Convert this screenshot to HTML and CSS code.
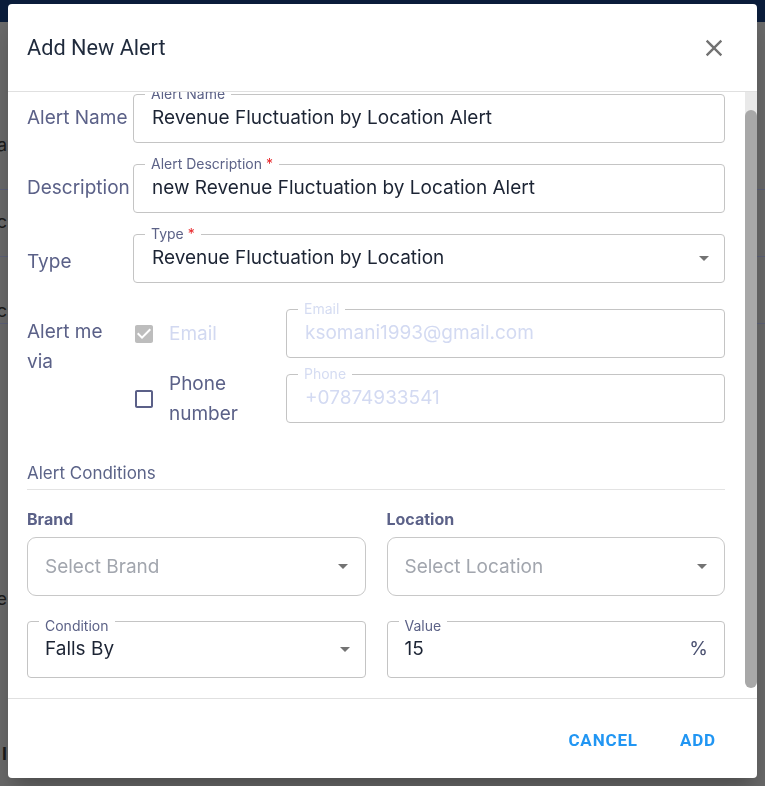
FILE: index.html
```html
<!DOCTYPE html>
<html lang="en">
<head>
<meta charset="utf-8">
<title>Add New Alert</title>
<link rel="stylesheet" href="styles.css">
</head>
<body>
<div class="page">
  <div class="page-bar"></div>
  <div class="ghost ghost-a"><span>Data</span></div>
  <div class="page-line line-1"></div>
  <div class="ghost ghost-c1"><span>Sync</span></div>
  <div class="page-line line-2"></div>
  <div class="ghost ghost-c2"><span>Sync</span></div>
  <div class="page-line line-3"></div>
  <div class="ghost ghost-ne"><span>Name</span></div>
  <div class="ghost ghost-l"><span>l</span></div>
</div>

<div class="backdrop">
  <div class="dialog" role="dialog" aria-labelledby="dlg-title">
    <header class="dialog-head">
      <h2 class="dialog-title" id="dlg-title">Add New Alert</h2>
      <button class="close-btn" aria-label="Close">
        <svg viewBox="0 0 24 24"><path d="M19 6.41 17.59 5 12 10.59 6.41 5 5 6.41 10.59 12 5 17.59 6.41 19 12 13.41 17.59 19 19 17.59 13.41 12z"/></svg>
      </button>
    </header>

    <div class="dialog-main">
      <div class="dialog-body" id="dialog-body">
        <div class="form-row">
          <div class="row-label">Alert Name</div>
          <fieldset class="field">
            <legend>Alert Name</legend>
            <div class="field-value">Revenue Fluctuation by Location Alert</div>
          </fieldset>
        </div>

        <div class="form-row">
          <div class="row-label">Description</div>
          <fieldset class="field">
            <legend>Alert Description <span class="req">*</span></legend>
            <div class="field-value">new Revenue Fluctuation by Location Alert</div>
          </fieldset>
        </div>

        <div class="form-row form-row-last">
          <div class="row-label row-label-low">Type</div>
          <fieldset class="field">
            <legend>Type <span class="req">*</span></legend>
            <div class="field-value"><span>Revenue Fluctuation by Location</span><span class="caret"></span></div>
          </fieldset>
        </div>

        <div class="via">
          <div class="via-label">Alert me<br>via</div>

          <div class="opt">
            <svg class="cb cb-checked" viewBox="0 0 24 24"><path d="M19 3H5c-1.11 0-2 .9-2 2v14c0 1.1.89 2 2 2h14c1.11 0 2-.9 2-2V5c0-1.1-.89-2-2-2zm-9 14l-5-5 1.41-1.41L10 14.17l7.59-7.59L19 8l-9 9z"/></svg>
            <span class="opt-text opt-disabled">Email</span>
          </div>
          <fieldset class="field field-disabled">
            <legend>Email</legend>
            <div class="field-value">ksomani1993@gmail.com</div>
          </fieldset>

          <div class="opt">
            <svg class="cb" viewBox="0 0 24 24"><path d="M19 5v14H5V5h14m0-2H5c-1.1 0-2 .9-2 2v14c0 1.1.9 2 2 2h14c1.1 0 2-.9 2-2V5c0-1.1-.9-2-2-2z"/></svg>
            <span class="opt-text opt-wrap">Phone number</span>
          </div>
          <fieldset class="field field-disabled">
            <legend>Phone</legend>
            <div class="field-value">+07874933541</div>
          </fieldset>
        </div>

        <div class="section-title">Alert Conditions</div>

        <div class="cond-grid">
          <div class="cond-col">
            <div class="cond-label">Brand</div>
            <div class="select-box"><span>Select Brand</span><span class="caret"></span></div>
          </div>
          <div class="cond-col">
            <div class="cond-label">Location</div>
            <div class="select-box"><span>Select Location</span><span class="caret"></span></div>
          </div>
          <fieldset class="field field-cond">
            <legend>Condition</legend>
            <div class="field-value"><span>Falls By</span><span class="caret"></span></div>
          </fieldset>
          <fieldset class="field field-cond">
            <legend>Value</legend>
            <div class="field-value"><span>15</span><span class="unit">%</span></div>
          </fieldset>
        </div>
      </div>
      <div class="scrollbar" aria-hidden="true"><div class="scroll-thumb"></div></div>
    </div>

    <footer class="dialog-foot">
      <button class="text-btn">Cancel</button>
      <button class="text-btn">Add</button>
    </footer>
  </div>
</div>
<script src="script.js"></script>
</body>
</html>
```

FILE: styles.css
```css
* { box-sizing: border-box; }
html, body { margin: 0; height: 100%; }
body {
  font-family: Inter, "Noto Sans", Arial, sans-serif;
  background: #6b6b6b;
  overflow: hidden;
}

/* page behind the backdrop */
.page { height: 786px; background: #6b6b6b; overflow: hidden; }
.page-bar { height: 22px; background: #0b1d3b; }
.page-line { height: 1px; background: #5e6279; }
.ghost {
  display: flex;
  justify-content: flex-end;
  width: 7px;
  font-size: 18px;
  line-height: 22px;
  color: #1c1c1c;
  white-space: nowrap;
}
.ghost-a { margin-top: 112px; }
.line-1 { margin-top: 33px; }
.ghost-c1 { margin-top: 21px; }
.line-2 { margin-top: 23px; }
.ghost-c2 { margin-top: 43px; }
.line-3 { margin-top: 1px; }
.ghost-ne { margin-top: 264px; }
.ghost-l { margin-top: 133px; font-weight: 700; }

/* dialog */
.backdrop {
  position: fixed;
  inset: 0;
  display: flex;
  justify-content: center;
  align-items: flex-start;
  padding-top: 4px;
}
.dialog {
  width: 749px;
  height: 774px;
  background: #fff;
  border-radius: 4px;
  display: flex;
  flex-direction: column;
  overflow: hidden;
  box-shadow: 0 11px 15px -7px rgba(0,0,0,.2), 0 24px 38px 3px rgba(0,0,0,.14);
}
.dialog-head {
  flex: none;
  height: 88px;
  display: flex;
  align-items: center;
  justify-content: space-between;
  padding: 0 29px 0 19px;
  border-bottom: 1px solid #e0e0e0;
}
.dialog-title {
  margin: 0;
  font-family: Roboto, "Liberation Sans", sans-serif;
  font-weight: 400;
  font-size: 21.7px;
  line-height: 26px;
  color: #1f2a3c;
}
.close-btn {
  width: 28px;
  height: 28px;
  padding: 0;
  border: 0;
  background: none;
  display: flex;
}
.close-btn svg { width: 28px; height: 28px; fill: #737373; }

.dialog-main {
  flex: 1;
  min-height: 0;
  display: flex;
}
.dialog-body {
  flex: 1;
  min-width: 0;
  overflow-y: auto;
  scrollbar-width: none;
  padding: 13px 20px 20px 19px;
}
.dialog-body::-webkit-scrollbar { display: none; }

.scrollbar {
  flex: none;
  width: 12px;
  display: flex;
  flex-direction: column;
  padding: 18px 0 10px;
  background: linear-gradient(#e9e9e9 0, #e9e9e9 40px, #fff 40px);
}
.scroll-thumb {
  flex: 1;
  background: #a8a8a8;
  border-radius: 6px;
}

.dialog-foot {
  flex: none;
  height: 80px;
  border-top: 1px solid #e0e0e0;
  display: flex;
  justify-content: flex-end;
  align-items: center;
  gap: 26px;
  padding: 2px 33px 0 0;
}
.text-btn {
  font-family: Roboto, "Liberation Sans", sans-serif;
  font-weight: 700;
  font-size: 17px;
  letter-spacing: 0.05em;
  text-transform: uppercase;
  color: #2196f3;
  background: none;
  border: 0;
  padding: 6px 8px;
}

/* form rows */
.form-row {
  display: grid;
  grid-template-columns: 106px 1fr;
  align-items: center;
  margin-bottom: 13px;
}
.form-row-last { margin-bottom: 18px; }
.row-label {
  font-size: 19px;
  line-height: 22px;
  color: #5b6188;
  padding-top: 7px;
  white-space: nowrap;
}
.row-label-low { padding-top: 15px; }

.field {
  margin: 0;
  min-width: 0;
  border: 1px solid #c4c4c4;
  border-radius: 4px;
  padding: 5px 11px 13px;
}
.field legend {
  padding: 0 6px;
  font-size: 14px;
  line-height: 16px;
  color: #5c6287;
}
.req { color: #e8262a; }
.field-value {
  padding-left: 7px;
  font-size: 19px;
  line-height: 22px;
  color: #1c2434;
  display: flex;
  justify-content: space-between;
  align-items: center;
  white-space: nowrap;
}
.caret {
  width: 0;
  height: 0;
  border-left: 5px solid transparent;
  border-right: 5px solid transparent;
  border-top: 5px solid #737373;
  margin-right: 4px;
}
.unit { color: #4a5070; margin-right: 5px; }

.field-disabled legend { color: #d5dcf2; }
.field-disabled .field-value { color: #d3daf2; }

/* alert me via */
.via {
  display: grid;
  grid-template-columns: 106px 153px 1fr;
  grid-template-rows: 57px 57px;
  row-gap: 8px;
  margin-bottom: 40px;
}
.via-label {
  grid-row: 1 / span 2;
  align-self: start;
  padding-top: 16px;
  font-size: 19px;
  line-height: 30px;
  color: #5b6188;
}
.opt {
  display: flex;
  align-items: center;
  padding-top: 8px;
  height: 57px;
}
.cb {
  flex: none;
  width: 24px;
  height: 24px;
  margin-left: -1px;
  margin-right: 13px;
  fill: #5b6088;
}
.cb-checked { fill: #bdbdbd; }
.opt-text {
  font-size: 19px;
  line-height: 30px;
  color: #5b6188;
}
.opt-disabled { color: #d2d9f1; }
.opt-wrap { max-width: 100px; }

/* conditions */
.section-title {
  font-size: 17px;
  line-height: 20px;
  color: #5b6388;
  padding-bottom: 6px;
  border-bottom: 1px solid #e3e3e3;
  margin-bottom: 19px;
}
.cond-grid {
  display: grid;
  grid-template-columns: 1fr 1fr;
  column-gap: 21px;
  row-gap: 12px;
}
.cond-label {
  font-weight: 700;
  font-size: 16px;
  line-height: 20px;
  color: #5b6188;
  margin-bottom: 8px;
}
.select-box {
  height: 59px;
  border: 1px solid #c8c8c8;
  border-radius: 9px;
  display: flex;
  align-items: center;
  justify-content: space-between;
  padding: 0 17px;
  font-size: 19px;
  color: #a2a6ae;
}
.select-box .caret { margin-right: 0; }
.field-cond { padding: 4px 11px 17px; }
.field-cond legend { padding-top: 10px; }
.field-cond .field-value { padding-left: 6px; }
```

FILE: script.js
```js
(function () {
  var body = document.getElementById('dialog-body');
  function toBottom() { body.scrollTop = body.scrollHeight; }
  toBottom();
  window.addEventListener('load', toBottom);
})();
```
